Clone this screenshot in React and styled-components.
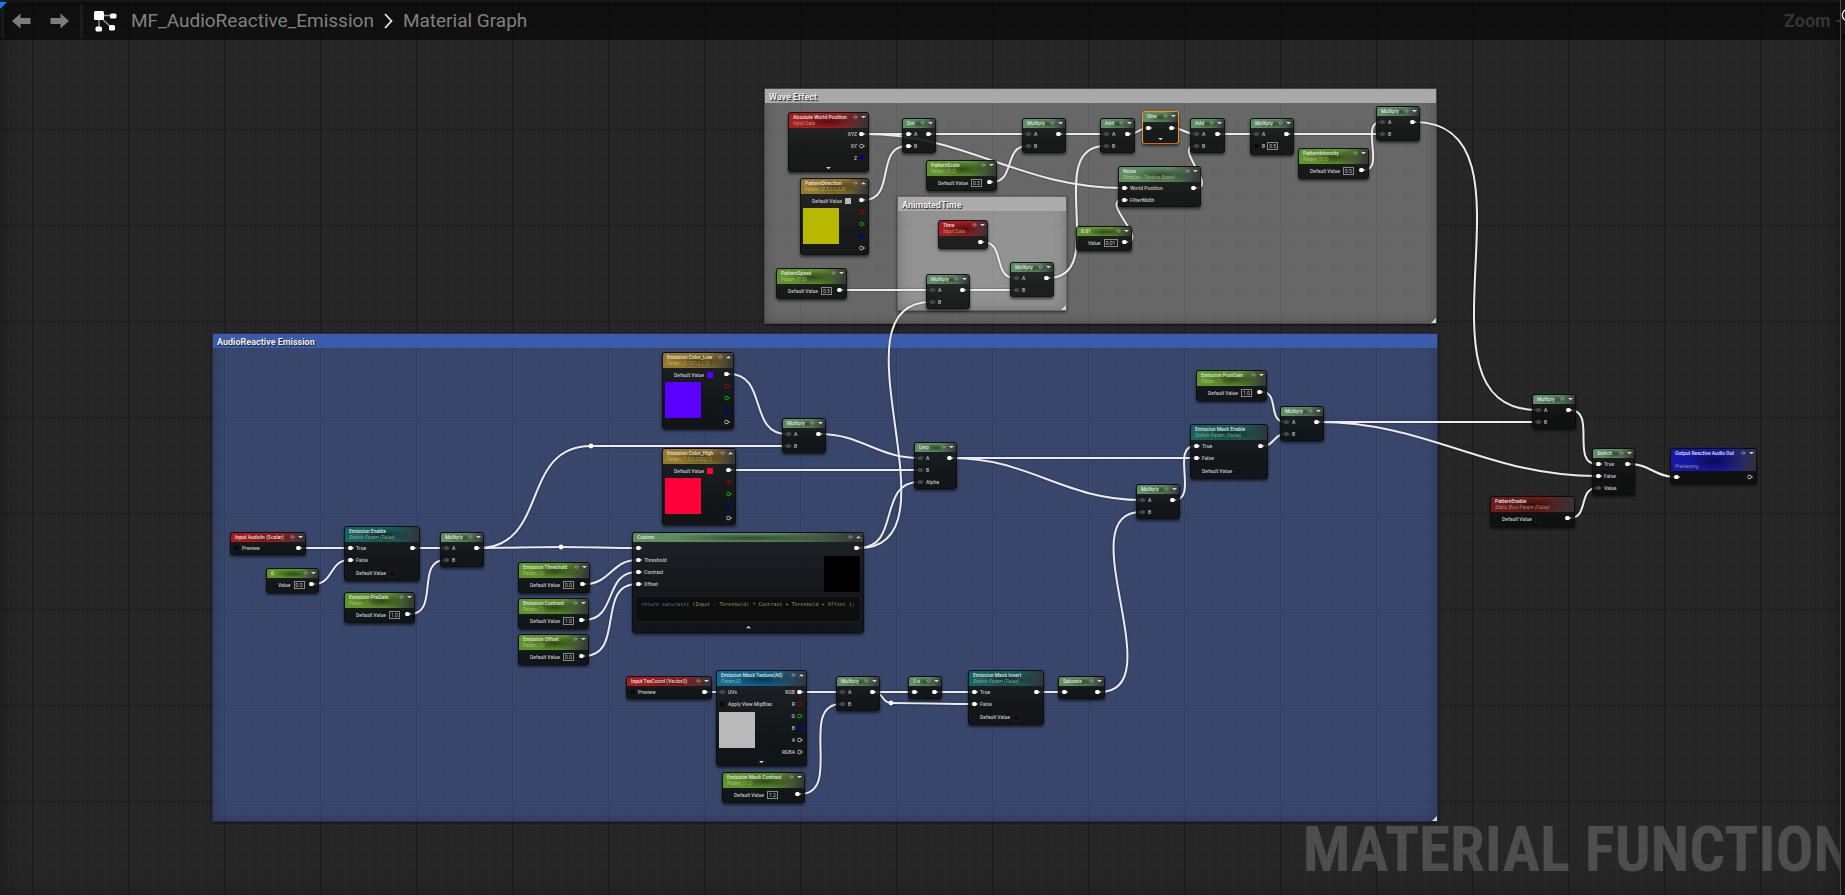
import React from "react";
import styled, { createGlobalStyle, css } from "styled-components";

const GlobalStyle = createGlobalStyle`
  * { box-sizing: border-box; }
  html, body { margin: 0; background: #151515; }
  body { font-family: Roboto, "Liberation Sans", sans-serif; color: #c4c4c4; }
  button, input { font: inherit; color: inherit; margin: 0; padding: 0; border: 0; background: none; }
`;

const TINT = {
  red: "#a51d1f",
  darkred: "#6d1a1c",
  lime: "#5f942d",
  green: "#5f8e62",
  gold: "#957829",
  teal: "#17615f",
  azure: "#126a96",
  navy: "#1618a8",
};

/* ---------- page frame ---------- */

const Page = styled.div`
  display: grid;
  grid-template-columns: minmax(0, 1fr) 5px;
  min-height: 100vh;
`;

const Editor = styled.div`
  display: grid;
  grid-template-rows: 40px minmax(0, 1fr);
  overflow: hidden;
`;

const Toolbar = styled.header`
  grid-area: 1 / 1;
  z-index: 2;
  display: flex;
  align-items: center;
  border-top: 2px solid #171717;
  background: rgba(0, 0, 0, 0.58);
  color: #808080;
  font-size: 19px;
  line-height: 24px;
  position: relative;
`;

const Corner = styled.svg`
  position: absolute;
  left: 0;
  top: 0;
`;

const NavGroup = styled.nav`
  display: flex;
  align-items: center;
  gap: 19px;
  height: 34px;
  padding: 0 11px 0 8px;
  margin-left: 1px;
  border-left: 3px solid #1b1b1b;
  border-right: 3px solid #1b1b1b;
`;

const NavButton = styled.button`
  display: flex;
  width: 19px;
  height: 16px;
`;

const Crumbs = styled.div`
  display: flex;
  align-items: center;
  flex: 1;
  padding-left: 11px;
  white-space: nowrap;
`;

const Crumb = styled.a`
  color: inherit;
  text-decoration: none;
  margin-left: ${(p) => p.$gap}px;
`;

const CrumbArrow = styled.svg`
  margin-left: 10px;
`;

const ZoomLabel = styled.div`
  width: 56px;
  overflow: hidden;
  white-space: nowrap;
  font-size: 18px;
  font-weight: 700;
  color: #343434;
`;

const SidePanel = styled.aside`
  background: #121212;
  border-left: 1px solid #4e4e4e;
  padding-top: 6px;
`;

const Canvas = styled.main`
  grid-area: 1 / 1 / 3 / 2;
  position: relative;
  overflow: hidden;
  min-height: 840px;
  background-color: #262626;
  background-image:
    linear-gradient(to right, #1b1b1b 1px, transparent 1px),
    linear-gradient(to bottom, #1b1b1b 1px, transparent 1px),
    linear-gradient(to right, #2a2a2a 1px, transparent 1px),
    linear-gradient(to bottom, #2a2a2a 1px, transparent 1px);
  background-size: 96px 96px, 96px 96px, 12px 12px, 12px 12px;
  background-position: 32px 33px, 32px 33px, 8px 9px, 8px 9px;

  &::after {
    content: "";
    position: absolute;
    inset: 0;
    box-shadow: inset 0 0 24px rgba(0, 0, 0, 0.35);
    pointer-events: none;
  }
`;

const Watermark = styled.div`
  position: absolute;
  right: -12px;
  bottom: 13px;
  font-family: "Roboto Condensed", "Liberation Sans Narrow", Roboto, sans-serif;
  font-weight: 700;
  font-size: 63px;
  line-height: 64px;
  white-space: nowrap;
  color: rgba(255, 255, 255, 0.18);
`;

/* ---------- comments and wires ---------- */

const CommentBox = styled.section`
  position: absolute;
  left: ${(p) => p.$x}px;
  top: ${(p) => p.$y}px;
  width: ${(p) => p.$w}px;
  height: ${(p) => p.$h}px;
  background: ${(p) => p.$body};
  box-shadow: inset 0 0 0 1px rgba(0, 0, 0, 0.2), inset 0 0 14px rgba(0, 0, 0, 0.25), 0 1px 3px rgba(0, 0, 0, 0.6);
`;

const CommentTitle = styled.h2`
  margin: 1px;
  padding-left: 4px;
  height: 14px;
  background: ${(p) => p.$head};
  color: #ececec;
  font-size: 9px;
  line-height: 16px;
  font-weight: 700;
  text-shadow: 1px 1px 1px #1c1c1c;
  white-space: nowrap;
`;

const Grip = styled.svg`
  position: absolute;
  right: 1px;
  bottom: 1px;
`;

const WireLayer = styled.svg`
  position: absolute;
  left: 0;
  top: 0;
  overflow: visible;
  filter: drop-shadow(0 0 1px rgba(0, 0, 0, 0.4));
`;

/* ---------- nodes ---------- */

const NodeBox = styled.article`
  position: absolute;
  left: ${(p) => p.$x}px;
  top: ${(p) => p.$y}px;
  width: ${(p) => p.$w}px;
  min-height: ${(p) => p.$h}px;
  display: flex;
  flex-direction: column;
  border: 1px solid ${(p) => (p.$selected ? "#f0980c" : "rgba(8, 9, 9, 0.55)")};
  border-bottom-color: ${(p) => (p.$selected ? "#d86a08" : "rgba(8, 9, 9, 0.7)")};
  border-radius: 3px;
  overflow: hidden;
  background: linear-gradient(to bottom, rgba(27, 29, 28, 0.86), rgba(12, 15, 13, 0.88) 70%);
  box-shadow: 0 2px 3px rgba(0, 0, 0, 0.6);
  font-size: 5px;
  line-height: 6px;
  font-weight: 500;
`;

const NodeHead = styled.header`
  display: flex;
  justify-content: space-between;
  flex: none;
  height: ${(p) => p.$h}px;
  padding: 1px 2px 0 4px;
  background:
    linear-gradient(100deg, transparent 60%, rgba(50, 52, 54, 0.92) 96%),
    radial-gradient(ellipse 38% 50% at 52% 55%, rgba(0, 0, 0, 0.5), transparent),
    ${(p) => TINT[p.$tint]};
`;

const Titles = styled.div`
  display: flex;
  flex-direction: column;
  white-space: nowrap;
`;

const Title = styled.span`
  color: #e2e2e2;
`;

const Subtitle = styled.em`
  color: rgba(222, 214, 160, 0.66);
  font-weight: 400;
  margin-top: ${(p) => (p.$late ? 7 : 0)}px;
`;

const HeadTools = styled.div`
  display: flex;
  align-items: flex-start;
  gap: 3px;
  padding-top: 1px;
`;

const IconButton = styled.button`
  display: flex;
  width: 5px;
  height: 4px;
`;

const Body = styled.div`
  display: flex;
  justify-content: space-between;
`;

const Column = styled.div`
  display: flex;
  flex-direction: column;
  align-items: ${(p) => (p.$end ? "flex-end" : "flex-start")};
  padding: ${(p) => (p.$end ? "0 3px 0 0" : "0 0 0 3px")};
`;

const Row = styled.div`
  display: flex;
  align-items: center;
  gap: 2px;
  height: 12px;
  white-space: nowrap;
`;

const ValueRow = styled.label`
  display: flex;
  align-items: center;
  gap: 3px;
  height: 14px;
  padding-left: 8px;
  white-space: nowrap;
`;

const ValueInput = styled.input`
  width: ${(p) => (p.$wide ? 14 : 11)}px;
  height: 8px;
  border: 1px solid #8a8a8a;
  text-align: center;
  font-weight: 400;
`;

const Check = styled.input`
  appearance: none;
  width: 7px;
  height: 7px;
  background: #0d0d0d;
  border: 1px solid rgba(70, 70, 70, 0.25);
`;

const Chip = styled.button`
  width: 6px;
  height: 6px;
  ${(p) =>
    p.$color
      ? css`background: ${p.$color};`
      : css`background: repeating-conic-gradient(#cfcfcf 0 25%, #a0a0a0 0 50%) 0 0 / 2px 2px;`}
`;

const Preview = styled.div`
  width: 36px;
  height: 36px;
  margin: ${(p) => p.$m};
  background: ${(p) => p.$color};
`;

const Code = styled.pre`
  margin: 5px 3px 0;
  padding: 4px 5px 0;
  height: 24px;
  background: #0c0d0d;
  outline: 1px solid rgba(50, 50, 50, 0.3);
  font-family: "DejaVu Sans Mono", "Liberation Mono", monospace;
  font-size: 5px;
  line-height: 6px;
  font-weight: 400;
  color: #a3a05c;

  b { font-weight: 400; color: #4a8cbc; }
`;

const Expander = styled.button`
  display: flex;
  justify-content: center;
  align-items: center;
  width: 100%;
  height: ${(p) => p.$h}px;
  flex: none;
`;

/* ---------- small drawings ---------- */

const Chevron = ({ up }) => (
  <svg width="5" height="4" viewBox="0 0 5 4">
    <path d={up ? "M0 3.2L2.5 1L5 3.2z" : "M0 1L2.5 3.2L5 1z"} fill="#d6d6d6" />
  </svg>
);

const Eye = () => (
  <svg width="5" height="4" viewBox="0 0 5 4">
    <ellipse cx="2.5" cy="2" rx="1.6" ry="1.2" fill="none" stroke="#a8a8a8" strokeWidth=".8" />
  </svg>
);

const PIN_COLORS = { on: "#fff", dim: "#474949", dark: "#090909", w: "#c8c8c8", r: "#c80000", g: "#00c800", b: "#0000d8" };

const Pin = ({ kind }) => {
  const c = PIN_COLORS[kind];
  const solid = kind === "on" || kind === "dim";
  return (
    <svg width="6" height="6" viewBox="0 0 6 6">
      {solid ? (
        <rect x="0.2" y="0.9" width="4.400" height="4.200" rx="1.600" fill={c} />
      ) : (
        <rect x="0.8" y="1.3" width="3.2" height="3.4" rx="1" fill="#0c0c0c" stroke={c} strokeWidth=".9" />
      )}
      <path d="M4.500 1.700L6 3L4.500 4.300z" fill={c} />
    </svg>
  );
};

const Arrow = ({ back }) => (
  <svg width="19" height="16" viewBox="0 0 19 16" transform={back ? undefined : "rotate(180)"}>
    <path d="M0 8L8.5 .5V5H18.5V11H8.5V15.5z" fill="#7c7c7c" />
  </svg>
);

const GraphIcon = () => (
  <svg width="23" height="21" viewBox="0 0 23 21">
    <path d="M5 4.500H18M5 5V17M6 6L17 16" stroke="#9a9a9a" strokeWidth="1.300" fill="none" />
    <rect x="0" y="0" width="10" height="9" rx="1.500" fill="#fff" />
    <rect x="16" y="2.500" width="6.500" height="5" rx="1.500" fill="#fff" />
    <rect x="1.500" y="15.500" width="6.500" height="5" rx="1.500" fill="#fff" />
    <rect x="15" y="14" width="6" height="5.500" rx="1.500" fill="#fff" />
  </svg>
);

/* ---------- graph data ---------- */

const AB = [{ l: "A", k: "dim" }, { l: "B", k: "dim" }];
const out1 = [{ k: "on" }];
const rgba = [{ k: "on" }, { k: "r" }, { k: "g" }, { k: "b" }, { k: "w" }];

const mul = (x, y) => ({ x, y, w: 44, h: 35, t: "Multiply", tint: "green", ins: AB, outs: out1 });
const param = (x, y, w, t, v, s) => ({ x, y, w, h: 30, t, s, tint: "lime", val: v, outs: out1 });
const toggle = (x, y, w, t) => ({
  x, y, w, h: 53, t, s: "Switch Param (False)", tint: "teal", bare: true, check: true,
  ins: [{ l: "True", k: "on" }, { l: "False", k: "on" }], outs: out1,
});

const NODES = [
  { x: 788, y: 112, w: 81, h: 60, t: "Absolute World Position", s: "Input Data", tint: "red", expand: 7,
    outs: [{ l: "XYZ", k: "on" }, { l: "XY", k: "w" }, { l: "Z", k: "b" }] },
  { x: 800, y: 178, w: 69, h: 77, t: "PatternDirection", s: "Param (0.5,0.5,0,0)", tint: "gold", up: true, chip: "", preview: "#b9b800", outs: rgba },
  param(776, 268, 71, "PatternSpeed", "0.5", "Param (0.5)"),
  { x: 902, y: 118, w: 34, h: 35, t: "Dot", tint: "green", ins: [{ l: "A", k: "on" }, { l: "B", k: "on" }], outs: out1 },
  param(926, 160, 71, "PatternScale", "0.5", "Param (0.5)"),
  mul(1022, 118),
  { x: 938, y: 220, w: 50, h: 29, t: "Time", s: "Input Data", tint: "red", outs: out1 },
  mul(926, 274),
  mul(1010, 262),
  { x: 1076, y: 226, w: 56, h: 25, t: "0.01", tint: "lime", val: "0.01", valLabel: "Value", outs: out1 },
  { x: 1100, y: 118, w: 35, h: 35, t: "Add", tint: "green", ins: AB, outs: out1 },
  { x: 1142, y: 111, w: 37, h: 32, t: "Sine", tint: "green", selected: true, expand: 9, ins: [{ k: "on" }], outs: out1 },
  { x: 1190, y: 118, w: 35, h: 35, t: "Add", tint: "green", ins: AB, outs: out1 },
  { x: 1250, y: 118, w: 44, h: 37, t: "Multiply", tint: "green", ins: [{ l: "A", k: "dim" }, { l: "B", k: "dark", box: "0.5" }], outs: out1 },
  param(1298, 148, 71, "PatternIntensity", "0.5", "Param (0.5)"),
  mul(1376, 106),
  { x: 1118, y: 166, w: 83, h: 41, t: "Noise", s: "Simplex - Texture Based", tint: "green",
    ins: [{ l: "World Position", k: "on" }, { l: "FilterWidth", k: "on" }], outs: out1 },

  { x: 662, y: 352, w: 72, h: 77, t: "Emission Color_Low", s: "Param (0.107,0,1,1)", tint: "gold", up: true, chip: "#5b00ff", preview: "#5b00ff", outs: rgba },
  { x: 662, y: 448, w: 74, h: 77, t: "Emission Color_High", s: "Param (1,0,0.0382,1)", tint: "gold", up: true, chip: "#ff0038", preview: "#ff0038", outs: rgba },
  mul(782, 418),
  { x: 914, y: 442, w: 43, h: 47, t: "Lerp", tint: "green", ins: [...AB, { l: "Alpha", k: "dim" }], outs: out1 },
  { x: 632, y: 532, w: 232, h: 100, t: "Custom", tint: "green", up: true, code: true,
    ins: [{ k: "on" }, { l: "Threshold", k: "on" }, { l: "Contrast", k: "on" }, { l: "Offset", k: "on" }], outs: out1 },

  { x: 230, y: 532, w: 76, h: 23, t: "Input AudioIn (Scalar)", tint: "red", ins: [{ l: "Preview", k: "dark" }], outs: out1 },
  { x: 266, y: 568, w: 53, h: 25, t: "0", tint: "lime", val: "0.0", valLabel: "Value", outs: out1 },
  toggle(344, 526, 76, "Emission Enable"),
  param(344, 592, 71, "Emission PreGain", "1.0", "Param (1)"),
  mul(440, 532),
  param(518, 562, 72, "Emission Threshold", "0.0", "Param (0)"),
  param(518, 598, 71, "Emission Contrast", "1.0", "Param (1)"),
  param(518, 634, 71, "Emission Offset", "0.0", "Param (0)"),

  { x: 626, y: 676, w: 86, h: 23, t: "Input TexCoord (Vector2)", tint: "red", ins: [{ l: "Preview", k: "dark" }], outs: out1 },
  { x: 716, y: 670, w: 91, h: 96, t: "Emission Mask Texture(A0)", s: "Param2D", tint: "azure", up: true, preview: "#bababa", expand: 7,
    ins: [{ l: "UVs", k: "dim" }, { l: "Apply View MipBias", k: "dark" }],
    outs: [{ l: "RGB", k: "on" }, { l: "R", k: "r" }, { l: "G", k: "g" }, { l: "B", k: "b" }, { l: "A", k: "w" }, { l: "RGBA", k: "w" }] },
  param(722, 772, 83, "Emission Mask Contrast", "1.2", "Param (1.2)"),
  mul(836, 676),
  { x: 908, y: 676, w: 34, h: 23, t: "1-x", tint: "green", ins: [{ k: "on" }], outs: out1 },
  toggle(968, 670, 76, "Emission Mask Invert"),
  { x: 1058, y: 676, w: 47, h: 23, t: "Saturate", tint: "green", ins: [{ k: "on" }], outs: out1 },

  param(1196, 370, 71, "Emission PostGain", "1.0", "Param (1)"),
  toggle(1190, 424, 78, "Emission Mask Enable"),
  mul(1280, 406),
  mul(1136, 484),

  mul(1532, 394),
  { x: 1592, y: 448, w: 43, h: 47, t: "Switch", tint: "green",
    ins: [{ l: "True", k: "on" }, { l: "False", k: "on" }, { l: "Value", k: "dim" }], outs: out1 },
  { x: 1490, y: 496, w: 85, h: 30, t: "PatternEnable", s: "Static Bool Param (False)", tint: "darkred", bare: true, check: true, outs: out1 },
  { x: 1670, y: 448, w: 87, h: 36, t: "Output Reactive Audio Out", s: "Previewing", late: true, tint: "navy", ins: [{ k: "on" }], outs: [{ k: "w" }] },
];

/* start x, start y, end x, end y */
const WIRES = [
  [864, 134, 907, 134], [864, 134, 1123, 188], [864, 200, 907, 146],
  [931, 134, 1027, 134], [992, 182, 1027, 146], [1060, 134, 1105, 134],
  [842, 290, 931, 290], [964, 290, 1015, 290], [983, 242, 1015, 278], [1048, 278, 1105, 146],
  [1130, 134, 1147, 128], [1173, 128, 1195, 134], [1220, 134, 1255, 134], [1288, 134, 1381, 134],
  [1364, 170, 1381, 122], [1126, 242, 1123, 200], [1196, 188, 1195, 146],
  [1414, 122, 1537, 410],
  [859, 548, 931, 302], [859, 548, 919, 482],
  [729, 374, 787, 434], [731, 470, 919, 470], [820, 434, 919, 458],
  [478, 548, 591, 446], [591, 446, 787, 446], [478, 548, 561, 547], [561, 547, 637, 548],
  [301, 548, 349, 548], [314, 584, 349, 560], [415, 548, 445, 548], [410, 614, 445, 560],
  [585, 584, 637, 560], [584, 620, 637, 572], [584, 656, 637, 584],
  [707, 692, 721, 692], [802, 692, 841, 692], [800, 794, 841, 704],
  [874, 692, 913, 692], [874, 692, 891, 703], [891, 703, 973, 704], [937, 692, 973, 692],
  [1039, 692, 1063, 692], [1100, 692, 1141, 512],
  [952, 458, 1195, 458], [952, 458, 1141, 500], [1174, 500, 1195, 446],
  [1262, 392, 1285, 422], [1263, 446, 1285, 434],
  [1318, 422, 1537, 422], [1318, 422, 1597, 476],
  [1570, 410, 1597, 464], [1570, 518, 1597, 488], [1630, 464, 1675, 477],
];

const REROUTES = [[591, 446], [561, 547], [891, 703]];

const wirePath = ([x1, y1, x2, y2]) => {
  const dx = x2 - x1;
  const dy = Math.abs(y2 - y1);
  const reach = dx >= 0 ? (dx + dy) / 3 : (-3 * dx + 1.5 * dy) / 3;
  return `M${x1} ${y1}C${x1 + reach} ${y1} ${x2 - reach} ${y2} ${x2} ${y2}`;
};

const COMMENTS = [
  { t: "Wave Effect", x: 764, y: 88, w: 673, h: 236, head: "#a9a9a9", body: "rgba(168,168,168,.5)" },
  { t: "AnimatedTime", x: 897, y: 196, w: 170, h: 115, head: "#ababab", body: "rgba(190,190,190,.5)" },
  { t: "AudioReactive Emission", x: 212, y: 333, w: 1226, h: 489, head: "#3b5bab", body: "rgba(72,99,171,.52)" },
];

/* ---------- composed parts ---------- */

const Comment = ({ c }) => (
  <CommentBox $x={c.x} $y={c.y} $w={c.w} $h={c.h} $body={c.body}>
    <CommentTitle $head={c.head}>{c.t}</CommentTitle>
    <Grip width="5" height="5" viewBox="0 0 5 5">
      <path d="M5 0V5H0z" fill="#d8d8d8" />
    </Grip>
  </CommentBox>
);

const GraphNode = ({ n }) => (
  <NodeBox $x={n.x} $y={n.y} $w={n.w} $h={n.h} $selected={n.selected} aria-label={n.t}>
    <NodeHead $h={n.late ? 22 : n.s ? 15 : n.selected ? 10 : 9} $tint={n.tint}>
      <Titles>
        <Title>{n.t}</Title>
        {n.s && <Subtitle $late={n.late}>{n.s}</Subtitle>}
      </Titles>
      {!n.bare && (
        <HeadTools>
          <IconButton aria-label="Toggle preview"><Eye /></IconButton>
          <IconButton aria-label="Toggle node"><Chevron up={n.up} /></IconButton>
        </HeadTools>
      )}
    </NodeHead>
    <Body>
      <Column>
        {n.ins && n.ins.map((p, i) => (
          <Row key={i}>
            <Pin kind={p.k} />
            {p.l}
            {p.box && <ValueInput aria-label={p.l} defaultValue={p.box} />}
          </Row>
        ))}
        {n.val && (
          <ValueRow>
            {n.valLabel || "Default Value"}
            <ValueInput $wide={n.val.length > 3} defaultValue={n.val} />
          </ValueRow>
        )}
        {n.check && (
          <ValueRow>
            Default Value
            <Check type="checkbox" />
          </ValueRow>
        )}
        {n.chip !== undefined && (
          <ValueRow as="div">
            Default Value
            <Chip $color={n.chip} aria-label="Pick color" />
          </ValueRow>
        )}
        {n.preview && <Preview $m={n.ins ? "2px 0 0 -1px" : "0 0 0 -1px"} $color={n.preview} />}
      </Column>
      <Column $end>
        {n.outs.map((p, i) => (
          <Row key={i}>
            {p.l}
            <Pin kind={p.k} />
          </Row>
        ))}
        {n.code && <Preview $m="2px 0 0 0" $color="#000" />}
      </Column>
    </Body>
    {n.code && (
      <Code>
        <b>return saturate</b>{"( (Input - Threshold) * Contrast + Threshold + Offset );"}
      </Code>
    )}
    {n.code && <Expander $h={11} aria-label="Collapse"><Chevron up /></Expander>}
    {n.expand && <Expander $h={n.expand} aria-label="Expand"><Chevron /></Expander>}
  </NodeBox>
);

export default function App() {
  return (
    <>
      <GlobalStyle />
      <Page>
        <Editor>
          <Toolbar>
            <Corner width="7" height="7" viewBox="0 0 7 7">
              <path d="M0 0H7L0 7z" fill="#0f7bf5" />
            </Corner>
            <NavGroup aria-label="History">
              <NavButton aria-label="Back"><Arrow back /></NavButton>
              <NavButton aria-label="Forward"><Arrow /></NavButton>
            </NavGroup>
            <Crumbs>
              <GraphIcon />
              <Crumb href="#function" $gap={14}>MF_AudioReactive_Emission</Crumb>
              <CrumbArrow width="9" height="16" viewBox="0 0 9 16">
                <path d="M1 1L7.500 8L1 15" fill="none" stroke="#e8e8e8" strokeWidth="1.800" />
              </CrumbArrow>
              <Crumb href="#graph" $gap={10}>Material Graph</Crumb>
            </Crumbs>
            <ZoomLabel>Zoom -</ZoomLabel>
          </Toolbar>
          <Canvas>
            {COMMENTS.map((c) => <Comment key={c.t} c={c} />)}
            <Watermark>MATERIAL FUNCTION</Watermark>
            <WireLayer width="100%" height="100%">
              <g fill="none" stroke="#ebebeb" strokeWidth="2">
                {WIRES.map((w, i) => <path key={i} d={wirePath(w)} />)}
              </g>
              {REROUTES.map(([x, y]) => <circle key={x} cx={x} cy={y} r="2.400" fill="#fff" />)}
            </WireLayer>
            {NODES.map((n) => <GraphNode key={`${n.x}-${n.y}`} n={n} />)}
          </Canvas>
        </Editor>
        <SidePanel>
          <svg width="4" height="40" viewBox="0 0 4 40">
            <path d="M4 4A6 6 0 0 0 4 14" fill="none" stroke="#cfcfcf" strokeWidth="1.500" />
            <circle cx="6" cy="31" r="5" fill="#050505" />
          </svg>
        </SidePanel>
      </Page>
    </>
  );
}
